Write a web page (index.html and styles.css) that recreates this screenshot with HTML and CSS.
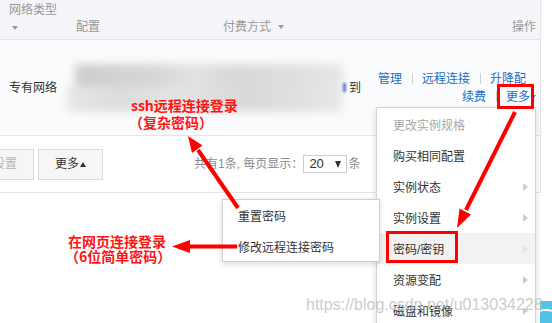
FILE: index.html
```html
<!DOCTYPE html>
<html lang="zh-CN">
<head>
<meta charset="utf-8">
<title>实例列表</title>
<link rel="stylesheet" href="styles.css">
</head>
<body>
<div class="page">
  <div class="main">
    <div class="table">
      <div class="thead">
        <div class="th th-net"><div>网络类型</div><div class="caret-line"><span class="caret"></span></div></div>
        <div class="th th-conf">配置</div>
        <div class="th th-pay">付费方式<span class="caret caret-pay"></span></div>
        <div class="th th-op">操作</div>
      </div>
      <div class="trow">
        <div class="td-net">专有网络</div>
        <div class="blur">
          <div class="blur-top"></div>
          <div class="blur-bottom"></div>
        </div>
        <span class="blue-bit"></span>
        <div class="td-due">到</div>
        <div class="ops">
          <div class="ops-line">
            <a class="link">管理</a><i class="sep"></i><a class="link">远程连接</a><i class="sep"></i><a class="link">升降配</a>
          </div>
          <div class="ops-line ops-line2">
            <a class="link">续费</a><i class="sep"></i><a class="link">更多</a><span class="caret caret-blue"></span>
          </div>
        </div>
      </div>
      <div class="toolbar">
        <div class="btn btn-disabled">设置</div>
        <div class="btn btn-more">更多<span class="caret-up"></span></div>
        <div class="pager">共有1条, 每页显示：<span class="select"><span class="sel-val">20</span><span class="caret-sel"></span></span>条</div>
      </div>
    </div>
  </div>
  <div class="side"><div class="side-ad"><span class="swoosh"></span></div></div>

  <div class="menu">
    <div class="mi mi-disabled">更改实例规格</div>
    <div class="mi">购买相同配置</div>
    <div class="mi">实例状态<span class="tri"></span></div>
    <div class="mi">实例设置<span class="tri"></span></div>
    <div class="mi mi-active">密码/密钥<span class="tri"></span></div>
    <div class="mi">资源变配<span class="tri"></span></div>
    <div class="mi">磁盘和镜像<span class="tri"></span></div>
  </div>

  <div class="submenu">
    <div class="si">重置密码</div>
    <div class="si">修改远程连接密码</div>
  </div>

  <div class="redbox redbox-more"></div>
  <div class="redbox redbox-pwd"></div>

  <div class="note note-ssh">
    <div class="note-l1">ssh远程连接登录</div>
    <div class="note-l2">（复杂密码）</div>
  </div>
  <div class="note note-web">
    <div class="note-l1">在网页连接登录</div>
    <div class="note-l2">（6位简单密码）</div>
  </div>

  <svg class="arrows" width="552" height="323" viewBox="0 0 552 323">
    <line x1="238" y1="208" x2="198" y2="150" stroke="#ff0000" stroke-width="4"/>
    <polygon points="188,136 202.5,145.5 192,153" fill="#ff0000"/>
    <line x1="237" y1="246.5" x2="188" y2="246.5" stroke="#ff0000" stroke-width="4"/>
    <polygon points="172,246.5 190,240 190,253" fill="#ff0000"/>
    <line x1="515" y1="112" x2="466" y2="210" stroke="#ff0000" stroke-width="4"/>
    <polygon points="457,228 459.5,208.5 471,214.5" fill="#ff0000"/>
  </svg>

  <div class="watermark">https://blog.csdn.net/u013034228</div>
</div>
</body>
</html>
```

FILE: styles.css
```css
html, body {
  margin: 0;
  padding: 0;
  background: #ffffff;
}

body {
  font-family: "Liberation Sans", "Noto Sans CJK SC", sans-serif;
  font-size: 12px;
  color: #333333;
}

.page {
  position: relative;
  width: 552px;
  height: 323px;
  overflow: hidden;
  display: flex;
}

.main {
  width: 541px;
  flex: none;
}

.table {
  border-right: 1px solid #e2e4e8;
}

/* header */
.thead {
  height: 39px;
  background: #f4f5f8;
  border-bottom: 1px solid #e1e4e9;
  display: flex;
  align-items: flex-end;
  color: #999999;
}

.th {
  line-height: 18px;
  padding-bottom: 3px;
  box-sizing: border-box;
  white-space: nowrap;
}

.th-net {
  width: 67px;
  padding-left: 9px;
  padding-bottom: 2px;
}

.caret-line {
  height: 18px;
  display: flex;
  align-items: center;
  padding-left: 3px;
}

.caret {
  display: inline-block;
  width: 0;
  height: 0;
  border-top: 4px solid #999999;
  border-left: 3.5px solid transparent;
  border-right: 3.5px solid transparent;
  vertical-align: middle;
}

.th-conf {
  width: 156px;
  padding-left: 9px;
}

.th-pay {
  width: 150px;
}

.caret-pay {
  margin-left: 7px;
  margin-top: -2px;
}

.th-op {
  flex: 1;
  text-align: right;
  padding-right: 4px;
}

/* data row */
.trow {
  height: 95px;
  background: #fafbfc;
  border-bottom: 1px solid #e1e4e9;
  display: flex;
  align-items: center;
}

.td-net {
  width: 67px;
  padding-left: 9px;
  box-sizing: border-box;
  flex: none;
  line-height: 18px;
  white-space: nowrap;
}

.blur {
  width: 276px;
  height: 48px;
  flex: none;
  display: flex;
  flex-direction: column;
  filter: blur(4px);
}

.blur-top {
  height: 22px;
  margin-left: 8px;
  background:
    linear-gradient(90deg, #cdcdcd 0%, #d6d6d6 30%, #e2e2e2 45%, #d8d8d8 60%, #dedede 80%, #e6e6e6 100%);
}

.blur-bottom {
  height: 26px;
  background:
    linear-gradient(90deg, #e6e6e6 0%, #dcdcdc 20%, #e4e4e4 40%, #d9d9d9 65%, #e0e0e0 85%, #e9e9e9 100%);
}

.blue-bit {
  width: 3px;
  height: 9px;
  flex: none;
  background: #5a78c8;
  filter: blur(1px);
}

.td-due {
  margin-left: 3px;
  line-height: 18px;
  flex: none;
}

.ops {
  margin-left: 17px;
  width: 158px;
  flex: none;
  line-height: 18px;
}

.ops-line {
  display: flex;
  align-items: center;
  white-space: nowrap;
}

.ops-line2 {
  justify-content: flex-end;
}

.link {
  color: #1a6ec7;
  text-decoration: none;
}

.sep {
  display: inline-block;
  width: 1px;
  height: 11px;
  background: #d0d0d0;
  margin: 0 9.5px;
}

.caret-blue {
  border-top-color: #5c7fa8;
  margin-left: 2px;
  border-top-width: 3px;
  border-left-width: 2.5px;
  border-right-width: 2.5px;
}

/* toolbar */
.toolbar {
  height: 56px;
  border-bottom: 1px solid #e1e4e9;
  display: flex;
  align-items: center;
  background: #ffffff;
}

.btn {
  height: 31px;
  box-sizing: border-box;
  border: 1px solid #dcdcdc;
  background: #f6f6f6;
  padding: 0 16px;
  line-height: 29px;
  white-space: nowrap;
  display: flex;
  align-items: center;
  flex: none;
}

.btn-disabled {
  margin-left: -24px;
  color: #b8b8b8;
}

.btn-more {
  margin-left: 4px;
  color: #333333;
}

.caret-up {
  display: inline-block;
  width: 0;
  height: 0;
  border-bottom: 5px solid #333333;
  border-left: 3.5px solid transparent;
  border-right: 3.5px solid transparent;
  margin-left: 1px;
  margin-top: 1px;
}

.pager {
  margin-left: 91px;
  color: #8a8a8a;
  display: flex;
  align-items: center;
  white-space: nowrap;
  line-height: 18px;
}

.select {
  width: 44px;
  height: 18px;
  box-sizing: border-box;
  border: 1px solid #cccccc;
  background: #ffffff;
  display: flex;
  align-items: center;
  margin-right: 1px;
  color: #333333;
}

.sel-val {
  padding-left: 5px;
  font-size: 13px;
}

.caret-sel {
  width: 0;
  height: 0;
  border-top: 7px solid #333333;
  border-left: 3.5px solid transparent;
  border-right: 3.5px solid transparent;
  margin-left: 11px;
}

/* side column */
.side {
  flex: 1;
  display: flex;
  flex-direction: column;
  justify-content: flex-end;
}

.side-ad {
  height: 22px;
  margin-left: -1px;
  background: #52c3e6;
  overflow: hidden;
  position: relative;
}

.swoosh {
  display: block;
  margin: 8px 0 0 -4px;
  width: 20px;
  height: 8px;
  border-top: 2px solid #ffffff;
  border-radius: 50%;
}

/* overlays */
.menu {
  position: absolute;
  left: 376px;
  top: 107px;
  width: 160px;
  box-sizing: border-box;
  border: 1px solid #d4d4d4;
  background: #ffffff;
  box-shadow: 0 2px 6px rgba(0, 0, 0, 0.15);
  padding-top: 1px;
}

.mi {
  height: 31px;
  padding-left: 16px;
  padding-right: 7px;
  display: flex;
  align-items: center;
  justify-content: space-between;
  white-space: nowrap;
  color: #333333;
}

.mi-disabled {
  color: #a8a8a8;
}

.mi-active {
  background: #f2f2f2;
}

.tri {
  width: 0;
  height: 0;
  border-left: 5px solid #cccccc;
  border-top: 4.5px solid transparent;
  border-bottom: 4.5px solid transparent;
}

.mi-active .tri {
  border-left-color: #e4e4e4;
}

.submenu {
  position: absolute;
  left: 222px;
  top: 199px;
  width: 158px;
  height: 63px;
  box-sizing: border-box;
  border: 1px solid #d0d0d0;
  background: #ffffff;
  box-shadow: 0 2px 6px rgba(0, 0, 0, 0.15);
}

.si {
  height: 31px;
  padding-left: 15px;
  display: flex;
  align-items: center;
  white-space: nowrap;
  color: #333333;
}

.redbox {
  position: absolute;
  box-sizing: border-box;
  border: 3px solid #ff0000;
}

.redbox-more {
  left: 497px;
  top: 84px;
  width: 37px;
  height: 25px;
}

.redbox-pwd {
  left: 386px;
  top: 231px;
  width: 72px;
  height: 32px;
}

.note {
  position: absolute;
  color: #ff1414;
  font-family: "Noto Sans CJK SC", sans-serif;
  font-weight: bold;
  font-size: 14px;
  white-space: nowrap;
}

.note-ssh {
  left: 131px;
  top: 97px;
  line-height: 17px;
}

.note-ssh .note-l2 {
  margin-left: -2px;
}

.note-web {
  left: 68px;
  top: 234px;
  line-height: 15px;
}

.note-web .note-l2 {
  margin-left: -3px;
}

.arrows {
  position: absolute;
  left: 0;
  top: 0;
}

.watermark {
  position: absolute;
  left: 306px;
  top: 296px;
  font-family: "Liberation Sans", sans-serif;
  font-size: 16px;
  line-height: 18px;
  color: rgba(185, 185, 185, 0.75);
  white-space: nowrap;
}
```
